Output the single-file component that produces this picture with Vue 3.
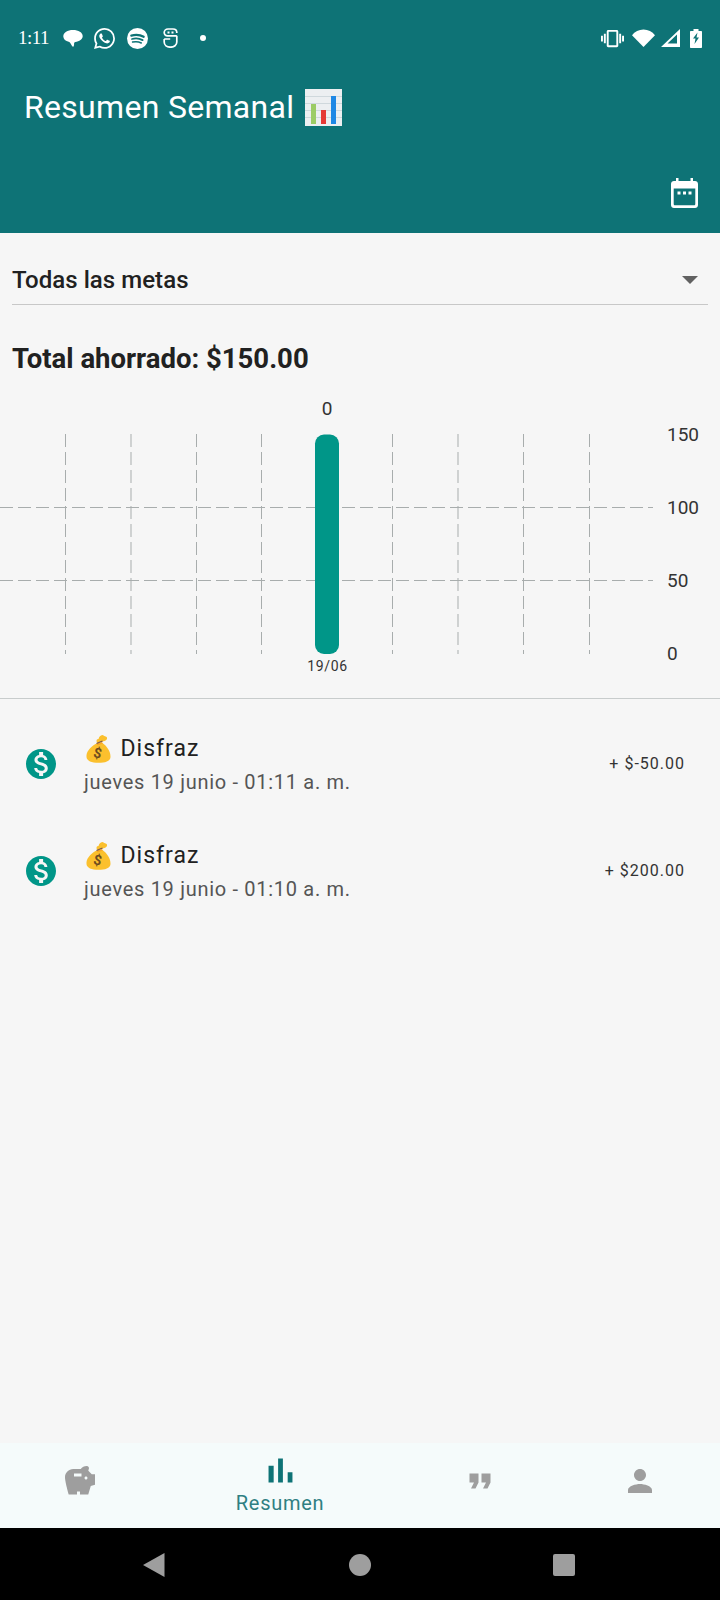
<template>
  <div class="screen">
    <header class="app-header">
      <div class="status-bar">
        <span class="clock">1:11</span>
        <div class="status-left">
          <!-- chat bubble -->
          <svg class="ic-bubble" viewBox="0 0 20 17" width="20" height="17">
            <path fill="#fff" d="M10 0C4.500 0 .3 2.600.3 6.400c0 2.700 2.400 4.600 5.400 5.400.9.2 1.500 1 2 1.900.5.9 1.500 3 2.500 3 .9 0 .9-2.300.9-3.400 0-.7.4-1.200 1.200-1.400 4-.7 7.400-2.700 7.400-5.700C19.700 2.500 15.500 0 10 0z" />
          </svg>
          <svg class="ic-app" viewBox="0 0 24 24" width="21" height="21">
            <path fill="#fff" d="M17.472 14.382c-.297-.149-1.758-.867-2.030-.967-.273-.099-.471-.148-.670.150-.197.297-.767.966-.940 1.164-.173.199-.347.223-.644.075-.297-.150-1.255-.463-2.390-1.475-.883-.788-1.480-1.761-1.653-2.059-.173-.297-.018-.458.130-.606.134-.133.298-.347.446-.520.149-.174.198-.298.298-.497.099-.198.050-.371-.025-.520-.075-.149-.669-1.612-.916-2.207-.242-.579-.487-.500-.669-.510-.173-.008-.371-.010-.570-.010-.198 0-.520.074-.792.372-.272.297-1.040 1.016-1.040 2.479 0 1.462 1.065 2.875 1.213 3.074.149.198 2.096 3.200 5.077 4.487.709.306 1.262.489 1.694.625.712.227 1.360.195 1.871.118.571-.085 1.758-.719 2.006-1.413.248-.694.248-1.289.173-1.413-.074-.124-.272-.198-.570-.347m-5.421 7.403h-.004a9.870 9.870 0 01-5.031-1.378l-.361-.214-3.741.982.998-3.648-.235-.374a9.860 9.860 0 01-1.510-5.260c.001-5.450 4.436-9.884 9.888-9.884 2.640 0 5.122 1.030 6.988 2.898a9.825 9.825 0 012.893 6.994c-.003 5.450-4.437 9.884-9.885 9.884m8.413-18.297A11.815 11.815 0 0012.050 0C5.495 0 .16 5.335.157 11.892c0 2.096.547 4.142 1.588 5.945L.057 24l6.305-1.654a11.882 11.882 0 005.683 1.448h.005c6.554 0 11.890-5.335 11.893-11.893a11.821 11.821 0 00-3.480-8.413z" />
          </svg>
          <svg class="ic-app" viewBox="0 0 21 21" width="21" height="21">
            <circle cx="10.500" cy="10.500" r="10.500" fill="#fff" />
            <path fill="none" stroke="#0e7376" stroke-linecap="round" stroke-width="2.200" d="M4.300 7.600c4-1.100 8.800-.8 12.400 1.200" />
            <path fill="none" stroke="#0e7376" stroke-linecap="round" stroke-width="1.800" d="M5 11c3.500-.9 7.400-.6 10.600 1.100" />
            <path fill="none" stroke="#0e7376" stroke-linecap="round" stroke-width="1.500" d="M5.600 14.100c2.900-.7 6-.5 8.700.9" />
          </svg>
          <svg class="ic-s" viewBox="0 0 15 20" width="15" height="20">
            <path fill="none" stroke="#fff" stroke-width="1.700" d="M13.800 7.800H4.500C2.500 7.800 1.200 6.300 1.200 4.500S2.800 1 5 1h5c2.200 0 3.800 1.500 3.800 3.500v.5M1.200 11v3c0 3 2.700 5.200 6.300 5.200s6.300-2.200 6.300-5.200V7.800M1.200 11h6" />
            <rect x="4.500" y="3.500" width="2" height="2" fill="#fff" />
            <rect x="8.500" y="3.500" width="2" height="2" fill="#fff" />
          </svg>
          <span class="status-dot"></span>
        </div>
        <div class="status-right">
          <svg viewBox="0 0 24 24" width="23" height="23">
            <path fill="#fff" d="M0 15h2V9H0v6zm3 2h2V7H3v10zm19-8v6h2V9h-2zm-3 8h2V7h-2v10zM16.500 3h-9C6.670 3 6 3.670 6 4.500v15c0 .830.670 1.500 1.500 1.500h9c.830 0 1.500-.670 1.500-1.500v-15c0-.830-.670-1.500-1.500-1.500zM16 19H8V5h8v14z" />
          </svg>
          <svg class="ic-wifi" viewBox="0 0 23 18" width="23" height="18">
            <path fill="#fff" d="M11.500 18L23 6.200C20.200 2.800 16.200.5 11.500.5S2.800 2.800 0 6.200z" />
          </svg>
          <svg class="ic-signal" viewBox="0 0 19 18" width="19" height="18">
            <path fill="#fff" fill-rule="evenodd" d="M0 18L19 0v18zM6.500 14.500h9.500V5.500z" />
          </svg>
          <svg class="ic-battery" viewBox="0 0 12 19" width="12" height="19">
            <path fill="#fff" fill-rule="evenodd" d="M3.500 0h5v2H11c.6 0 1 .4 1 1v15c0 .6-.4 1-1 1H1c-.6 0-1-.4-1-1V3c0-.6.4-1 1-1h2.500zM7.500 3.500L3 9.500h2.500L4.500 15l4.500-6.500H6.500z" />
          </svg>
        </div>
      </div>

      <div class="title-row">
        <h1 class="title">Resumen Semanal</h1>
        <!-- bar chart emoji -->
        <svg class="title-emoji" viewBox="0 0 37 37" width="37" height="37">
          <rect width="37" height="37" fill="#eceff1" />
          <path stroke="#cfd8dc" stroke-width="1" d="M0 7.500h37M0 14.500h37M0 21.500h37M0 28.500h37" />
          <rect x="6" y="15" width="5" height="20" fill="#9ccc65" />
          <rect x="16" y="21" width="5" height="14" fill="#e53935" />
          <rect x="26" y="7" width="5" height="28" fill="#1e88e5" />
        </svg>
      </div>

      <div class="header-actions">
        <svg viewBox="0 0 27 30" width="27" height="30">
          <path fill="#fff" fill-rule="evenodd" d="M5 0h2.500v3h12V0H22v3h2c1.700 0 3 1.300 3 3v21c0 1.700-1.300 3-3 3H3c-1.700 0-3-1.300-3-3V6c0-1.700 1.300-3 3-3h2zM2.700 10.500V26c0 .800.500 1.300 1.300 1.300h19c.800 0 1.300-.500 1.300-1.300V10.500z" />
          <rect x="6.500" y="13.500" width="3" height="3" fill="#fff" />
          <rect x="12" y="13.500" width="3" height="3" fill="#fff" />
          <rect x="17.500" y="13.500" width="3" height="3" fill="#fff" />
        </svg>
      </div>
    </header>

    <main class="content">
      <div class="dropdown">
        <span>Todas las metas</span>
        <span class="dropdown-arrow"></span>
      </div>

      <h2 class="total">Total ahorrado: $150.00</h2>

      <svg class="chart" viewBox="0 0 720 302" width="720" height="302">
        <line v-for="x in gridX" :key="x" :x1="x" :x2="x" y1="38" y2="258" class="grid-line" />
        <line v-for="y in gridY" :key="y" x1="0" x2="653" :y1="y" :y2="y" class="grid-line" />
        <rect x="315" y="38.500" width="24" height="219.500" rx="9" fill="#009688" />
        <text x="327" y="19" text-anchor="middle" class="axis-text">0</text>
        <text v-for="t in axisLabels" :key="t.label" x="667" :y="t.y" class="axis-text">{{ t.label }}</text>
        <text x="327.500" y="275" text-anchor="middle" class="date-text">19/06</text>
      </svg>

      <section class="movements">
        <div v-for="m in movements" :key="m.time" class="movement">
          <svg class="coin" viewBox="0 0 24 24" width="36" height="36">
            <path fill="#009688" d="M12 2C6.480 2 2 6.480 2 12s4.480 10 10 10 10-4.480 10-10S17.520 2 12 2zm1.410 16.090V20h-2.670v-1.930c-1.710-.360-3.160-1.460-3.270-3.400h1.960c.1 1.050.820 1.870 2.650 1.870 1.960 0 2.400-.980 2.400-1.590 0-.830-.440-1.610-2.670-2.140-2.480-.6-4.180-1.620-4.180-3.670 0-1.720 1.390-2.840 3.110-3.210V4h2.670v1.950c1.860.450 2.790 1.860 2.850 3.390H14.300c-.050-1.110-.640-1.870-2.220-1.870-1.500 0-2.400.680-2.400 1.640 0 .840.650 1.390 2.670 1.910s4.180 1.390 4.180 3.910c-.010 1.830-1.380 2.830-3.120 3.160z" />
          </svg>
          <div class="movement-text">
            <div class="movement-title">
              <!-- money bag emoji -->
              <svg viewBox="0 0 25 28" width="25" height="28">
                <path fill="#fbc02d" d="M9.500 9C4 12.500 0 17 .5 22c.4 4 5 5.800 12 5.800 6.500 0 11.800-1.300 12-5.800.3-6-4-11-8-14z" />
                <path fill="#f9a825" d="M10.500 8.500l5.500-1.500.8 1.500-5.300 2z" />
                <path fill="#fbc02d" d="M11 8C10 5.500 10.500 4 12.500 4c.5-2.500 2.500-4 4.500-4 .5 1.500 3.500 1 4 2.500.5 2-1 3-2.500 3.500-1 .4-2.500.5-3.500 1z" />
                <path stroke="#795548" stroke-width="1.200" d="M10.500 8.500L16.500 6" />
                <text x="12" y="23" text-anchor="middle" transform="rotate(12 12 19)" class="bag-sign">$</text>
              </svg>
              <span>Disfraz</span>
            </div>
            <div class="movement-date">{{ m.date }}</div>
          </div>
          <div class="movement-amount">{{ m.amount }}</div>
        </div>
      </section>
    </main>

    <nav class="bottom-nav">
      <div class="nav-item">
        <svg viewBox="0 0 24 24" width="36" height="36">
          <path fill="#9e9e9e" d="M19.830 7.500l-2.270-2.270c.070-.420.180-.810.320-1.150A1.498 1.498 0 0016.500 2c-1.640 0-3.090.790-4 2h-5C4.460 4 2 6.460 2 9.500S4.500 21 4.500 21H10v-2h2v2h5.500l1.680-5.590 2.820-.940V7.500h-2.170zM13 9H8V7h5v2zm3 2c-.550 0-1-.450-1-1s.450-1 1-1 1 .450 1 1-.450 1-1 1z" />
        </svg>
      </div>
      <div class="nav-item nav-item-active">
        <svg viewBox="0 0 24 24" width="41" height="41">
          <path fill="#0e7376" d="M5 9.200h3V19H5zM10.600 5h2.800v14h-2.800zm5.600 8H19v6h-2.800z" />
        </svg>
        <span class="nav-label">Resumen</span>
      </div>
      <div class="nav-item">
        <svg viewBox="0 0 24 24" width="36" height="36">
          <path fill="#9e9e9e" d="M6 17h3l2-4V7H5v6h3zm8 0h3l2-4V7h-6v6h3z" />
        </svg>
      </div>
      <div class="nav-item">
        <svg viewBox="0 0 24 24" width="36" height="36">
          <path fill="#9e9e9e" d="M12 12c2.210 0 4-1.790 4-4s-1.790-4-4-4-4 1.790-4 4 1.790 4 4 4zm0 2c-2.670 0-8 1.340-8 4v2h16v-2c0-2.660-5.330-4-8-4z" />
        </svg>
      </div>
    </nav>

    <div class="system-nav">
      <svg viewBox="0 0 22 24" width="22" height="24">
        <path fill="#9e9e9e" d="M21.500 0v24L0 12z" />
      </svg>
      <span class="sys-circle"></span>
      <span class="sys-square"></span>
    </div>
  </div>
</template>

<script setup>
const gridX = [65.5, 131, 196.5, 261.5, 392.5, 458, 523.5, 589.5]
const gridY = [111.5, 184.5]

const axisLabels = [
  { label: '150', y: 45 },
  { label: '100', y: 118 },
  { label: '50', y: 191 },
  { label: '0', y: 264 }
]

const movements = [
  { date: 'jueves 19 junio - 01:11 a. m.', time: '0111', amount: '+ $-50.00' },
  { date: 'jueves 19 junio - 01:10 a. m.', time: '0110', amount: '+ $200.00' }
]
</script>

<style>
html,
body {
  background: #f6f6f6;
}
</style>

<style scoped>
.screen {
  width: 720px;
  height: 1600px;
  display: flex;
  flex-direction: column;
  background: #f6f6f6;
  font-family: Roboto, "Noto Sans", sans-serif;
  color: #212121;
  overflow: hidden;
}

/* Header */
.app-header {
  height: 233px;
  flex: none;
  background: #0e7376;
  color: #fff;
  display: flex;
  flex-direction: column;
}

.status-bar {
  height: 40px;
  margin-top: 18px;
  padding: 0 18px 0 18px;
  display: flex;
  align-items: center;
}

.clock {
  font-family: "Liberation Serif", serif;
  font-size: 19px;
  letter-spacing: -0.5px;
  width: 45px;
}

.status-left {
  display: flex;
  align-items: center;
  gap: 12px;
}

.ic-bubble {
  margin-right: -1px;
}

.ic-s {
  margin-left: 3px;
}

.status-dot {
  width: 6px;
  height: 6px;
  border-radius: 50%;
  background: #fff;
  margin-left: 10px;
}

.status-right {
  margin-left: auto;
  display: flex;
  align-items: center;
  gap: 8px;
}

.ic-signal {
  margin-left: -2px;
}

.ic-battery {
  margin-left: 2px;
}

.title-row {
  margin-top: 29px;
  padding-left: 24px;
  display: flex;
  align-items: center;
  gap: 11px;
}

.title {
  margin: 0;
  font-size: 32px;
  font-weight: 400;
  line-height: 40px;
  letter-spacing: 0.3px;
}

.header-actions {
  margin-top: auto;
  padding: 0 22px 25px 0;
  display: flex;
  justify-content: flex-end;
}

.header-actions svg {
  display: block;
}

/* Body */
.content {
  flex: 1;
  display: flex;
  flex-direction: column;
}

.dropdown {
  height: 72px;
  margin: 0 12px;
  padding: 0 10px 9px 0;
  box-sizing: border-box;
  border-bottom: 1px solid #c8c8c8;
  display: flex;
  align-items: flex-end;
  justify-content: space-between;
  font-size: 24px;
  font-weight: 500;
  line-height: 30px;
  letter-spacing: 0.05px;
}

.dropdown-arrow {
  width: 0;
  height: 0;
  border-left: 8px solid transparent;
  border-right: 8px solid transparent;
  border-top: 8px solid #616161;
  margin-bottom: 11px;
}

.total {
  margin: 34px 0 0 12px;
  font-size: 27.5px;
  font-weight: 700;
  line-height: 40px;
}

.chart {
  display: block;
  margin-top: 17px;
  flex: none;
}

.grid-line {
  stroke: #a8adad;
  stroke-width: 1;
  stroke-dasharray: 13 5;
}

.axis-text {
  font-family: Roboto, sans-serif;
  font-size: 19px;
  fill: #333;
}

.date-text {
  font-family: Roboto, sans-serif;
  font-size: 14px;
  letter-spacing: 0.7px;
  fill: #333;
}

.movements {
  border-top: 1px solid #c8cccc;
  padding-top: 11px;
}

.movement {
  height: 107px;
  padding: 0 35px 0 23px;
  display: flex;
  align-items: center;
}

.coin {
  flex: none;
}

.movement-text {
  margin-left: 25px;
  padding-top: 1px;
}

.movement-title {
  display: flex;
  align-items: center;
  gap: 10px;
  font-size: 23px;
  line-height: 30px;
  letter-spacing: 1px;
}

.movement-title svg {
  margin-left: 1.500px;
}

.bag-sign {
  font-family: Roboto, sans-serif;
  font-size: 14px;
  font-weight: 700;
  fill: #6d4c1f;
}

.movement-date {
  margin-top: 5px;
  font-size: 20px;
  line-height: 26px;
  letter-spacing: 0.7px;
  color: #555;
}

.movement-amount {
  margin-left: auto;
  font-size: 16px;
  letter-spacing: 1px;
  color: #333;
}

/* Bottom navigation */
.bottom-nav {
  height: 85px;
  flex: none;
  display: grid;
  grid-template-columns: 160px 240px 160px 160px;
  background: #f5fbfb;
}

.nav-item {
  display: flex;
  flex-direction: column;
  align-items: center;
  padding-top: 20px;
}

.nav-item svg {
  display: block;
}

.nav-item-active {
  padding-top: 7px;
}

.nav-label {
  margin-top: -1px;
  font-size: 20px;
  line-height: 26px;
  letter-spacing: 0.7px;
  color: #2f7f82;
}

/* Android buttons */
.system-nav {
  height: 72px;
  flex: none;
  background: #000;
  display: flex;
  align-items: center;
  padding: 2px 0 0 143px;
  box-sizing: border-box;
}

.system-nav svg {
  display: block;
}

.sys-circle {
  width: 22px;
  height: 22px;
  margin-left: 184px;
  border-radius: 50%;
  background: #9e9e9e;
}

.sys-square {
  width: 22px;
  height: 22px;
  margin-left: 182px;
  border-radius: 2px;
  background: #9e9e9e;
}
</style>
